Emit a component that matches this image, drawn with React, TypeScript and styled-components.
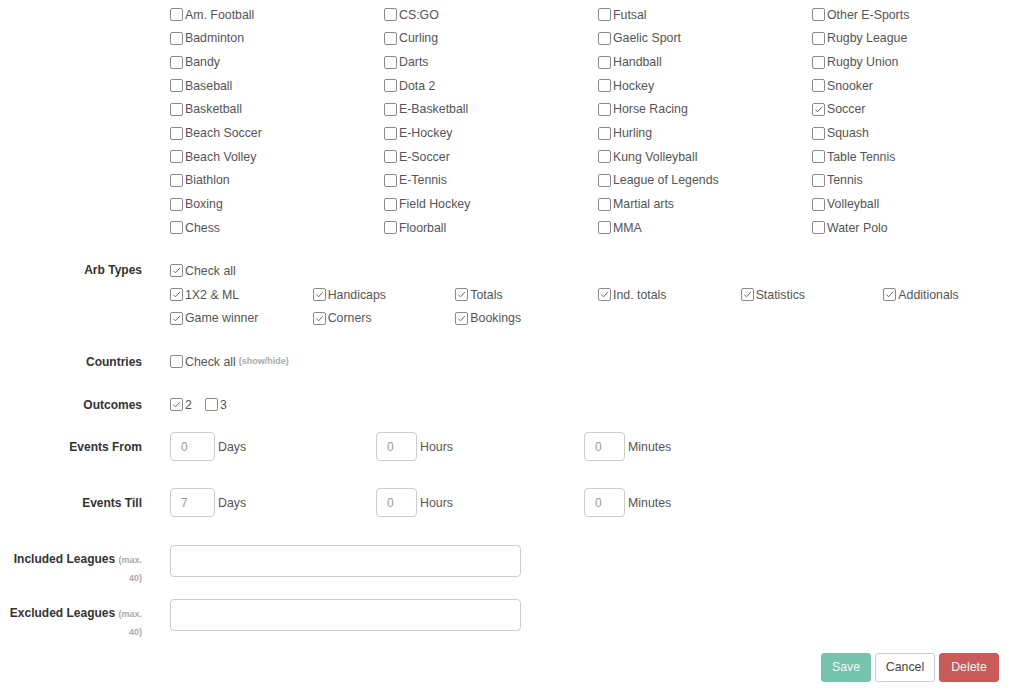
import { useState } from 'react'
import styled, { createGlobalStyle } from 'styled-components'

const Reset = createGlobalStyle`
  html, body { margin: 0; padding: 0; background: #fff; }
  body {
    font-family: 'Liberation Sans', Arial, Helvetica, sans-serif;
    font-size: 12px;
    color: #555;
  }
  * { box-sizing: border-box; }
`

const Page = styled.form`
  width: 1024px;
  padding-top: 3px;
`

const Row = styled.div<{ $mb: number; $align?: string }>`
  display: flex;
  align-items: ${(p) => p.$align || 'flex-start'};
  margin-bottom: ${(p) => p.$mb}px;
`

const Label = styled.div`
  width: 142px;
  flex-shrink: 0;
  text-align: right;
  font-weight: bold;
  font-size: 12px;
  line-height: 18px;
  color: #333;
`

const TallLabel = styled(Label)`
  padding-top: 5px;
`

const Hint = styled.span`
  font-size: 9px;
  line-height: 1;
  font-weight: bold;
  color: #aaa;
`

const Body = styled.div`
  margin-left: 28px;
  flex: 1;
`

const Grid = styled.div<{ $cols: number; $w: number; $flow?: string; $rows?: number }>`
  display: grid;
  grid-template-columns: repeat(${(p) => p.$cols}, ${(p) => p.$w}px);
  grid-auto-rows: 23.67px;
  ${(p) => (p.$rows ? `grid-template-rows: repeat(${p.$rows}, 23.67px);` : '')}
  grid-auto-flow: ${(p) => p.$flow || 'row'};
`

const Check = styled.label<{ $gap?: number }>`
  display: inline-flex;
  align-items: center;
  height: 23.67px;
  cursor: pointer;
  color: #555;
  font-size: 12.35px;
  white-space: nowrap;
  margin-right: ${(p) => p.$gap || 0}px;
`

const Box = styled.span`
  width: 13px;
  height: 13px;
  border: 1px solid #8a8a8a;
  border-radius: 2px;
  background: #fff;
  margin-right: 2px;
  display: inline-flex;
  align-items: center;
  justify-content: center;
  flex-shrink: 0;
  svg {
    width: 11px;
    height: 11px;
  }
`

const Inline = styled.div`
  display: flex;
  align-items: center;
  height: 23.67px;
`

const Fields = styled.div`
  display: grid;
  grid-template-columns: 206px 208px 207px;
`

const Field = styled.div`
  display: flex;
  align-items: center;
  gap: 3px;
  font-size: 12.35px;
`

const SmallInput = styled.input<{ $w: number }>`
  width: ${(p) => p.$w}px;
  height: 29px;
  border: 1px solid #ccc;
  border-radius: 4px;
  padding: 0 10px;
  font-family: inherit;
  font-size: 12px;
  color: #999;
  outline: none;
`

const WideInput = styled.input`
  width: 351px;
  height: 32px;
  border: 1px solid #ccc;
  border-radius: 4px;
  padding: 0 10px;
  font-family: inherit;
  font-size: 12px;
  color: #555;
  outline: none;
`

const Actions = styled.div`
  display: flex;
  justify-content: flex-end;
  gap: 4px;
  padding-right: 25px;
`

const Btn = styled.button<{ $kind: 'save' | 'cancel' | 'delete'; $w: number }>`
  width: ${(p) => p.$w}px;
  height: 29px;
  border-radius: 3px;
  font-family: inherit;
  font-size: 12.35px;
  cursor: pointer;
  border: 1px solid
    ${(p) => (p.$kind === 'save' ? '#76c3ad' : p.$kind === 'delete' ? '#c95b5b' : '#ccc')};
  background: ${(p) => (p.$kind === 'save' ? '#76c3ad' : p.$kind === 'delete' ? '#c95b5b' : '#fff')};
  color: ${(p) => (p.$kind === 'cancel' ? '#444' : '#f4f4f4')};
`

const sports = [
  'Am. Football', 'Badminton', 'Bandy', 'Baseball', 'Basketball', 'Beach Soccer', 'Beach Volley', 'Biathlon', 'Boxing', 'Chess',
  'CS:GO', 'Curling', 'Darts', 'Dota 2', 'E-Basketball', 'E-Hockey', 'E-Soccer', 'E-Tennis', 'Field Hockey', 'Floorball',
  'Futsal', 'Gaelic Sport', 'Handball', 'Hockey', 'Horse Racing', 'Hurling', 'Kung Volleyball', 'League of Legends', 'Martial arts', 'MMA',
  'Other E-Sports', 'Rugby League', 'Rugby Union', 'Snooker', 'Soccer', 'Squash', 'Table Tennis', 'Tennis', 'Volleyball', 'Water Polo',
]

const arbTypes = ['1X2 & ML', 'Handicaps', 'Totals', 'Ind. totals', 'Statistics', 'Additionals', 'Game winner', 'Corners', 'Bookings']

function CheckItem({ label, checked, onToggle, gap }: { label: string; checked: boolean; onToggle: () => void; gap?: number }) {
  return (
    <Check $gap={gap} onClick={onToggle}>
      <Box>
        {checked && (
          <svg viewBox="0 0 11 11">
            <path d="M2.3 5.6 L4.5 7.8 L8.8 3.2" fill="none" stroke="#666" strokeWidth="1" />
          </svg>
        )}
      </Box>
      {label}
    </Check>
  )
}

export default function App() {
  const [checked, setChecked] = useState<Record<string, boolean>>(() => {
    const init: Record<string, boolean> = { Soccer: true, arbAll: true, out2: true }
    arbTypes.forEach((a) => (init['arb:' + a] = true))
    return init
  })

  const toggle = (key: string) => setChecked((c) => ({ ...c, [key]: !c[key] }))

  return (
    <Page onSubmit={(e) => e.preventDefault()}>
      <Reset />

      <Row $mb={19.5}>
        <Label />
        <Body>
          <Grid $cols={4} $w={214} $rows={10} $flow="column">
            {sports.map((s) => (
              <CheckItem key={s} label={s} checked={!!checked[s]} onToggle={() => toggle(s)} />
            ))}
          </Grid>
        </Body>
      </Row>

      <Row $mb={20}>
        <Label style={{ lineHeight: '23.67px' }}>Arb Types</Label>
        <Body>
          <Inline>
            <CheckItem label="Check all" checked={!!checked.arbAll} onToggle={() => toggle('arbAll')} />
          </Inline>
          <Grid $cols={6} $w={142.67}>
            {arbTypes.map((a) => (
              <CheckItem key={a} label={a} checked={!!checked['arb:' + a]} onToggle={() => toggle('arb:' + a)} />
            ))}
          </Grid>
        </Body>
      </Row>

      <Row $mb={19.4} $align="center">
        <Label>Countries</Label>
        <Body>
          <Inline>
            <CheckItem label="Check all" checked={!!checked.countries} onToggle={() => toggle('countries')} gap={3} />
            <Hint>(show/hide)</Hint>
          </Inline>
        </Body>
      </Row>

      <Row $mb={15.3} $align="center">
        <Label>Outcomes</Label>
        <Body>
          <Inline>
            <CheckItem label="2" checked={!!checked.out2} onToggle={() => toggle('out2')} gap={13} />
            <CheckItem label="3" checked={!!checked.out3} onToggle={() => toggle('out3')} />
          </Inline>
        </Body>
      </Row>

      <Row $mb={27} $align="center">
        <Label>Events From</Label>
        <Body>
          <Fields>
            <Field><SmallInput $w={45} defaultValue="0" />Days</Field>
            <Field><SmallInput $w={41} defaultValue="0" />Hours</Field>
            <Field><SmallInput $w={41} defaultValue="0" />Minutes</Field>
          </Fields>
        </Body>
      </Row>

      <Row $mb={27.5} $align="center">
        <Label>Events Till</Label>
        <Body>
          <Fields>
            <Field><SmallInput $w={45} defaultValue="7" />Days</Field>
            <Field><SmallInput $w={41} defaultValue="0" />Hours</Field>
            <Field><SmallInput $w={41} defaultValue="0" />Minutes</Field>
          </Fields>
        </Body>
      </Row>

      <Row $mb={13}>
        <TallLabel>
          Included Leagues <Hint>(max. 40)</Hint>
        </TallLabel>
        <Body>
          <WideInput />
        </Body>
      </Row>

      <Row $mb={13}>
        <TallLabel>
          Excluded Leagues <Hint>(max. 40)</Hint>
        </TallLabel>
        <Body>
          <WideInput />
        </Body>
      </Row>

      <Actions>
        <Btn type="submit" $kind="save" $w={50}>Save</Btn>
        <Btn type="button" $kind="cancel" $w={60}>Cancel</Btn>
        <Btn type="button" $kind="delete" $w={60}>Delete</Btn>
      </Actions>
    </Page>
  )
}
